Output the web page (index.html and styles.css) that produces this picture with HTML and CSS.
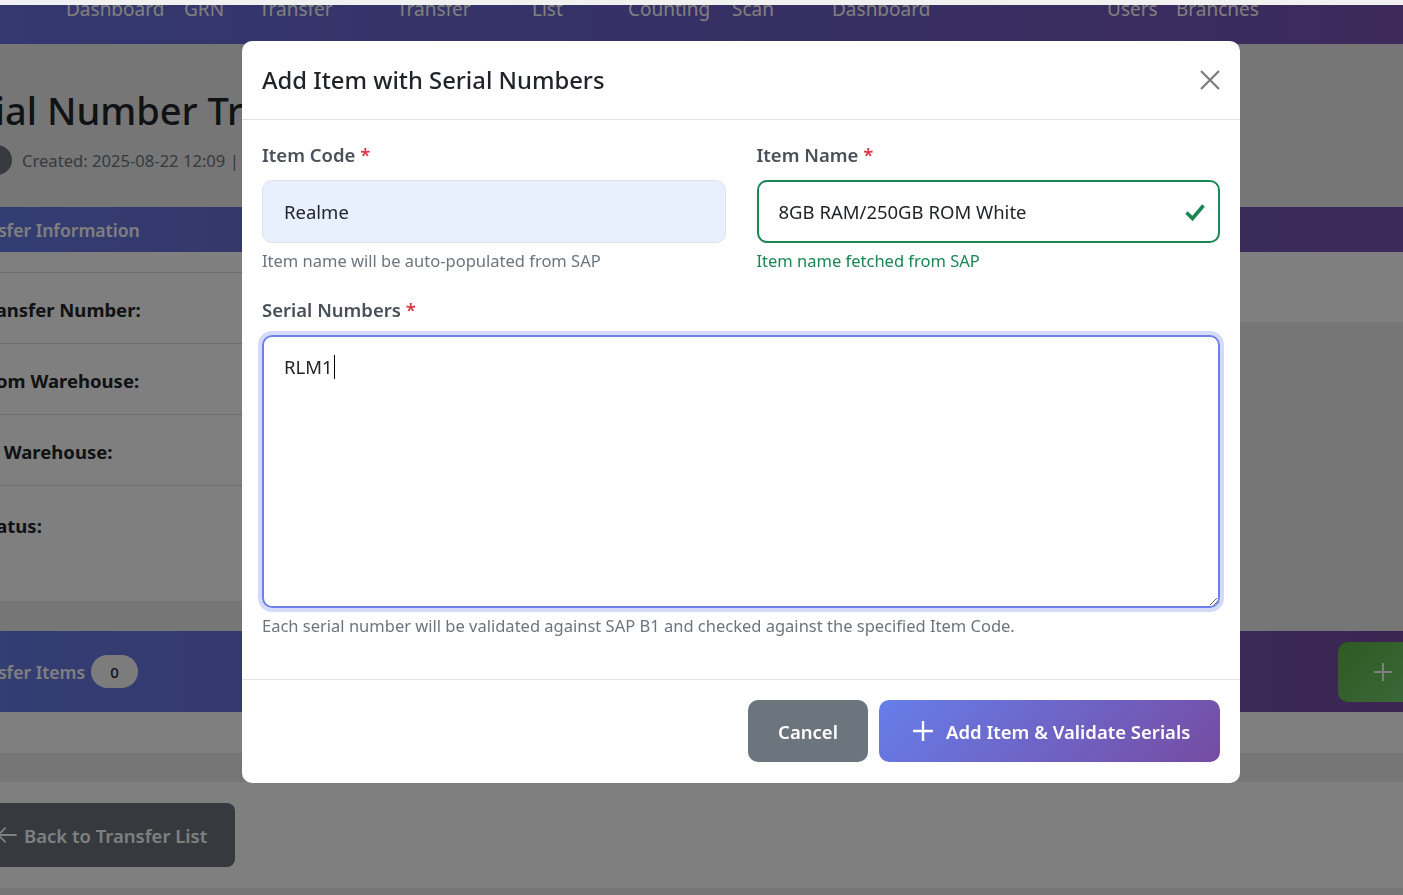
FILE: index.html
```html
<!DOCTYPE html>
<html lang="en">
<head>
<meta charset="utf-8">
<title>Serial Number Transfer</title>
<link rel="stylesheet" href="styles.css">
</head>
<body>
<div class="topstrip"></div>
<nav class="navbar">
  <span class="nav-link">Dashboard</span>
  <span class="nav-link">GRN</span>
  <span class="nav-link">Transfer</span>
  <span class="nav-link">Transfer</span>
  <span class="nav-link">List</span>
  <span class="nav-link">Counting</span>
  <span class="nav-link">Scan</span>
  <span class="nav-link">Dashboard</span>
  <span class="nav-link">Users</span>
  <span class="nav-link">Branches</span>
</nav>

<main class="page">
  <h1 class="page-title">Serial Number Transfer</h1>
  <div class="meta">
    <span class="status-badge">Draft</span>
    <span class="meta-text">Created: 2025-08-22 12:09 | By: admin</span>
  </div>

  <div class="info-row">
    <section class="card info-card">
      <header class="card-header info-header">Transfer Information</header>
      <div class="info-body">
        <div class="info-line"><span class="info-label">Transfer Number:</span></div>
        <div class="info-line"><span class="info-label">From Warehouse:</span></div>
        <div class="info-line"><span class="info-label">To Warehouse:</span></div>
        <div class="info-line info-line-last"><span class="info-label">Status:</span></div>
      </div>
    </section>
    <section class="card side-card">
      <header class="card-header"></header>
      <div class="side-body"></div>
    </section>
  </div>

  <section class="card items-card">
    <header class="card-header items-header">
      <span class="items-title">Transfer Items <span class="count-badge">0</span></span>
      <button class="add-btn" type="button" aria-label="Add item">
        <svg width="22" height="22" viewBox="0 0 22 22"><path d="M11 2v18M2 11h18" stroke="#fff" stroke-width="2" fill="none"/></svg>
      </button>
    </header>
    <div class="items-body"></div>
  </section>

  <div class="page-footer">
    <button class="back-btn" type="button">
      <svg width="22" height="22" viewBox="0 0 16 16"><path d="M15 8H1.7M7 2.7 1.7 8 7 13.3" stroke="#fff" stroke-width="1.3" fill="none"/></svg>
      Back to Transfer List
    </button>
  </div>
</main>

<div class="backdrop"></div>

<div class="modal" role="dialog" aria-labelledby="modalTitle">
  <div class="modal-header">
    <h5 class="modal-title" id="modalTitle">Add Item with Serial Numbers</h5>
    <svg class="close" width="22" height="22" viewBox="0 0 22 22" aria-label="Close"><path d="M2 2l18 18M20 2 2 20" stroke="#7b7b7b" stroke-width="2.2" fill="none"/></svg>
  </div>
  <div class="modal-body">
    <div class="field-grid">
      <div class="field">
        <label class="field-label">Item Code <span class="req">*</span></label>
        <div class="input input-auto">Realme</div>
        <div class="help">Item name will be auto-populated from SAP</div>
      </div>
      <div class="field">
        <label class="field-label">Item Name <span class="req">*</span></label>
        <div class="input input-valid">
          <span>8GB RAM/250GB ROM White</span>
          <svg width="22" height="18" viewBox="0 0 22 18"><path d="M2.5 9.5 8.5 15.5 19.5 2.5" stroke="#198754" stroke-width="3.6" fill="none"/></svg>
        </div>
        <div class="help help-ok">Item name fetched from SAP</div>
      </div>
    </div>
    <div class="field field-serial">
      <label class="field-label">Serial Numbers <span class="req">*</span></label>
      <div class="serial-box">RLM1<span class="caret"></span></div>
      <div class="help">Each serial number will be validated against SAP B1 and checked against the specified Item Code.</div>
    </div>
  </div>
  <div class="modal-footer">
    <button class="btn btn-cancel" type="button">Cancel</button>
    <button class="btn btn-primary" type="button">
      <svg width="22" height="22" viewBox="0 0 22 22"><path d="M11 1v20M1 11h20" stroke="#fff" stroke-width="2.4" fill="none"/></svg>
      Add Item &amp; Validate Serials
    </button>
  </div>
</div>
</body>
</html>
```

FILE: styles.css
```css
* { box-sizing: border-box; }

html, body {
  margin: 0;
  width: 1403px;
  height: 895px;
  overflow: hidden;
}

body {
  font-family: "Noto Sans", "Open Sans", sans-serif;
  background: #ececec;
  color: #212529;
}

.topstrip {
  height: 5px;
  background: #f1f1f1;
  position: relative;
  z-index: 3;
}

.navbar {
  height: 39px;
  overflow: hidden;
  background: linear-gradient(90deg, #6872de 0%, #6c5fc8 55%, #7a54b6 100%);
  display: grid;
  grid-template-columns: 118px 75px 138px 135px 96px 104px 100px 275px 69px auto;
  padding-left: 66px;
  align-items: start;
}

.nav-link {
  color: #fff;
  font-size: 19px;
  line-height: 24px;
  margin-top: -8px;
  white-space: nowrap;
}

/* ---------- page under the modal ---------- */
.page {
  margin-left: -70px;
  width: 1495px;
}

.page-title {
  margin: 44px 0 0 6px;
  font-size: 38px;
  font-weight: 500;
  line-height: 45px;
  height: 45px;
  white-space: nowrap;
}

.meta {
  margin-top: 12px;
  height: 30px;
  display: flex;
  align-items: center;
  gap: 10px;
  padding-left: 16px;
}

.status-badge {
  height: 30px;
  width: 66px;
  border-radius: 15px;
  background: #6c757d;
  color: #fff;
  font-size: 15px;
  display: inline-flex;
  align-items: center;
  justify-content: center;
}

.meta-text {
  font-size: 16.6px;
  color: #6c757d;
  white-space: nowrap;
}

.info-row {
  margin-top: 32px;
  display: flex;
  gap: 24px;
  align-items: flex-start;
}

.card {
  background: #fff;
}

.card-header {
  background: linear-gradient(90deg, #667eea, #764ba2);
  color: #fff;
}

.info-card {
  width: 1110px;
}

.side-card {
  flex: 1;
}

.info-header {
  height: 45px;
  display: flex;
  align-items: center;
  padding-left: 30px;
  font-size: 17.6px;
  font-weight: 600;
}

.side-card .card-header {
  height: 45px;
  background: linear-gradient(90deg, #7058b8, #7a54b4);
}

.side-body {
  height: 70px;
}

.info-body {
  padding: 20px 0 36px 48px;
}

.info-line {
  height: 71px;
  border-top: 1px solid #dcdcdc;
  display: flex;
  align-items: center;
  padding-top: 2px;
}

.info-line-last {
  height: 80px;
  align-items: flex-start;
  padding-top: 27px;
}

.info-label {
  font-size: 18.5px;
  font-weight: 700;
  color: #212529;
}

.items-card {
  margin-top: 30px;
}

.items-header {
  height: 81px;
  display: flex;
  align-items: center;
  justify-content: space-between;
  padding: 0 0 0 30px;
}

.items-title {
  font-size: 17.6px;
  font-weight: 600;
  display: flex;
  align-items: center;
  gap: 6px;
  white-space: nowrap;
}

.count-badge {
  width: 47px;
  height: 33px;
  border-radius: 17px;
  background: #f8f9fa;
  color: #212529;
  font-size: 15px;
  font-weight: 500;
  display: inline-flex;
  align-items: center;
  justify-content: center;
}

.add-btn {
  width: 87px;
  height: 60px;
  margin-right: 0;
  border: 0;
  border-radius: 10px;
  background: linear-gradient(135deg, #5cb446, #7ad474);
  display: flex;
  align-items: center;
  padding-left: 34px;
}

.items-body {
  height: 41px;
}

.page-footer {
  margin-top: 29px;
  height: 106px;
  background: #fff;
  padding-top: 21px;
}

.back-btn {
  margin-left: 32px;
  height: 64px;
  width: 273px;
  border: 0;
  border-radius: 8px;
  background: #6c757d;
  color: #fff;
  font: 600 18.5px "Noto Sans", sans-serif;
  display: flex;
  align-items: center;
  gap: 6px;
  padding-left: 34px;
  white-space: nowrap;
}

/* ---------- modal ---------- */
.backdrop {
  position: fixed;
  top: 5px;
  left: 0;
  right: 0;
  bottom: 0;
  background: rgba(0, 0, 0, 0.5);
  z-index: 5;
}

.modal {
  position: fixed;
  top: 41px;
  left: 242px;
  width: 998px;
  background: #fff;
  border-radius: 10px;
  z-index: 10;
}

.modal-header {
  height: 79px;
  padding: 0 20px;
  display: flex;
  align-items: center;
  justify-content: space-between;
  border-bottom: 1px solid #dee2e6;
}

.modal-title {
  margin: 0;
  font-size: 23.8px;
  font-weight: 500;
  color: #212529;
}

.close {
  margin-right: -1px;
}

.modal-body {
  padding: 20px 20px 0;
}

.field-grid {
  display: grid;
  grid-template-columns: 1fr 1fr;
  column-gap: 31px;
  margin-bottom: 21px;
}

.field-serial {
  margin-bottom: 40px;
}

.field-label {
  display: block;
  font-size: 18.5px;
  font-weight: 600;
  line-height: 30px;
  color: #495057;
  margin-bottom: 10px;
}

.req {
  color: #dc3545;
}

.input {
  height: 63px;
  border: 1px solid #dde3ec;
  border-radius: 10px;
  padding: 0 21px;
  display: flex;
  align-items: center;
  font-size: 18.5px;
  color: #212529;
}

.input-auto {
  background: #e8f0fe;
}

.input-valid {
  border: 2px solid #198754;
  padding: 0 12px 0 20px;
  justify-content: space-between;
}

.help {
  margin-top: 5px;
  font-size: 16.5px;
  line-height: 26px;
  color: #6c757d;
}

.help-ok {
  color: #198754;
}

.serial-box {
  height: 273px;
  border: 2px solid #6b80e8;
  border-radius: 10px;
  box-shadow: 0 0 0 4px rgba(102, 126, 234, 0.28);
  padding: 15px 20px;
  font-size: 18.5px;
  line-height: 30px;
  color: #212529;
  resize: vertical;
  overflow: auto;
}

.caret {
  display: inline-block;
  width: 1px;
  height: 24px;
  background: #000;
  vertical-align: -5px;
  margin-left: 1px;
}

.modal-footer {
  border-top: 1px solid #dee2e6;
  padding: 20px 20px 21px;
  display: flex;
  justify-content: flex-end;
  gap: 11px;
}

.btn {
  height: 62px;
  border: 0;
  border-radius: 10px;
  color: #fff;
  font: 600 18.5px "Noto Sans", sans-serif;
  display: inline-flex;
  align-items: center;
}

.btn-cancel {
  width: 120px;
  justify-content: center;
  background: #6c757d;
}

.btn-primary {
  width: 341px;
  padding: 0 0 0 33px;
  gap: 12px;
  background: linear-gradient(135deg, #667eea, #764ba2);
}
```
